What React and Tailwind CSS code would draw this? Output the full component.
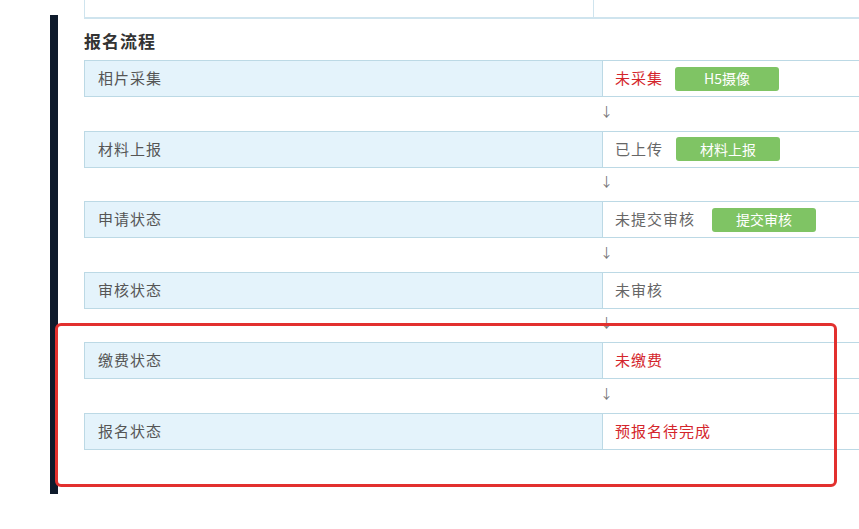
import React from 'react';

const rows = [
  { label: '相片采集', status: '未采集', red: true, button: 'H5摄像', gap: 'ml-[12px]' },
  { label: '材料上报', status: '已上传', button: '材料上报', gap: 'ml-[13px]' },
  { label: '申请状态', status: '未提交审核', button: '提交审核', gap: 'ml-[17px]' },
  { label: '审核状态', status: '未审核' },
  { label: '缴费状态', status: '未缴费', red: true },
  { label: '报名状态', status: '预报名待完成', red: true },
];

function Row({ row }) {
  return (
    <div className="flex h-[37px]">
      <div className="w-[519px] shrink-0 bg-[#e4f3fb] border border-[#bcd9e5] pl-[13px] flex items-center text-[15px] tracking-[1px] text-[#555]">
        {row.label}
      </div>
      <div className="flex-1 border-y border-[#bcd9e5] pl-[12px] flex items-center text-[15px] tracking-[1px]">
        <span className={row.red ? 'text-[#d4252b]' : 'text-[#666]'}>{row.status}</span>
        {row.button && (
          <span className={`${row.gap} w-[104px] h-[24px] rounded-[3px] bg-[#7fc464] text-white text-[14px] tracking-normal flex items-center justify-center`}>
            {row.button}
          </span>
        )}
      </div>
    </div>
  );
}

function Arrow() {
  return (
    <div className="h-[33.5px] flex items-center pb-[7px] pl-[519px] text-[13px] text-[#777]">
      <span className="ml-[-3px]">↓</span>
    </div>
  );
}

export default function App() {
  return (
    <div
      className="w-[859px] h-[529px] bg-white overflow-hidden relative flex items-start"
      style={{ fontFamily: '"Noto Sans CJK SC", "Noto Sans", sans-serif' }}
    >
      <div className="ml-[50px] mt-[15px] w-[8px] h-[479px] bg-[#0e1a2b] shrink-0" />
      <div className="ml-[26px] w-[800px] shrink-0">
        <div className="flex h-[19px]">
          <div className="w-[509px] border-l border-b-2 border-[#cfe4ee]" />
          <div className="flex-1 border-l border-b-2 border-[#cfe4ee]" />
        </div>
        <div className="h-[41px] flex items-center pt-[3px] text-[17px] tracking-[1px] font-bold text-[#333]">
          报名流程
        </div>
        {rows.map((row, i) => (
          <React.Fragment key={row.label}>
            {i > 0 && <Arrow />}
            <Row row={row} />
          </React.Fragment>
        ))}
      </div>
      <div className="absolute left-[55px] top-[323px] w-[782px] h-[164px] border-[3px] border-[#e2302e] rounded-[6px]" />
    </div>
  );
}
